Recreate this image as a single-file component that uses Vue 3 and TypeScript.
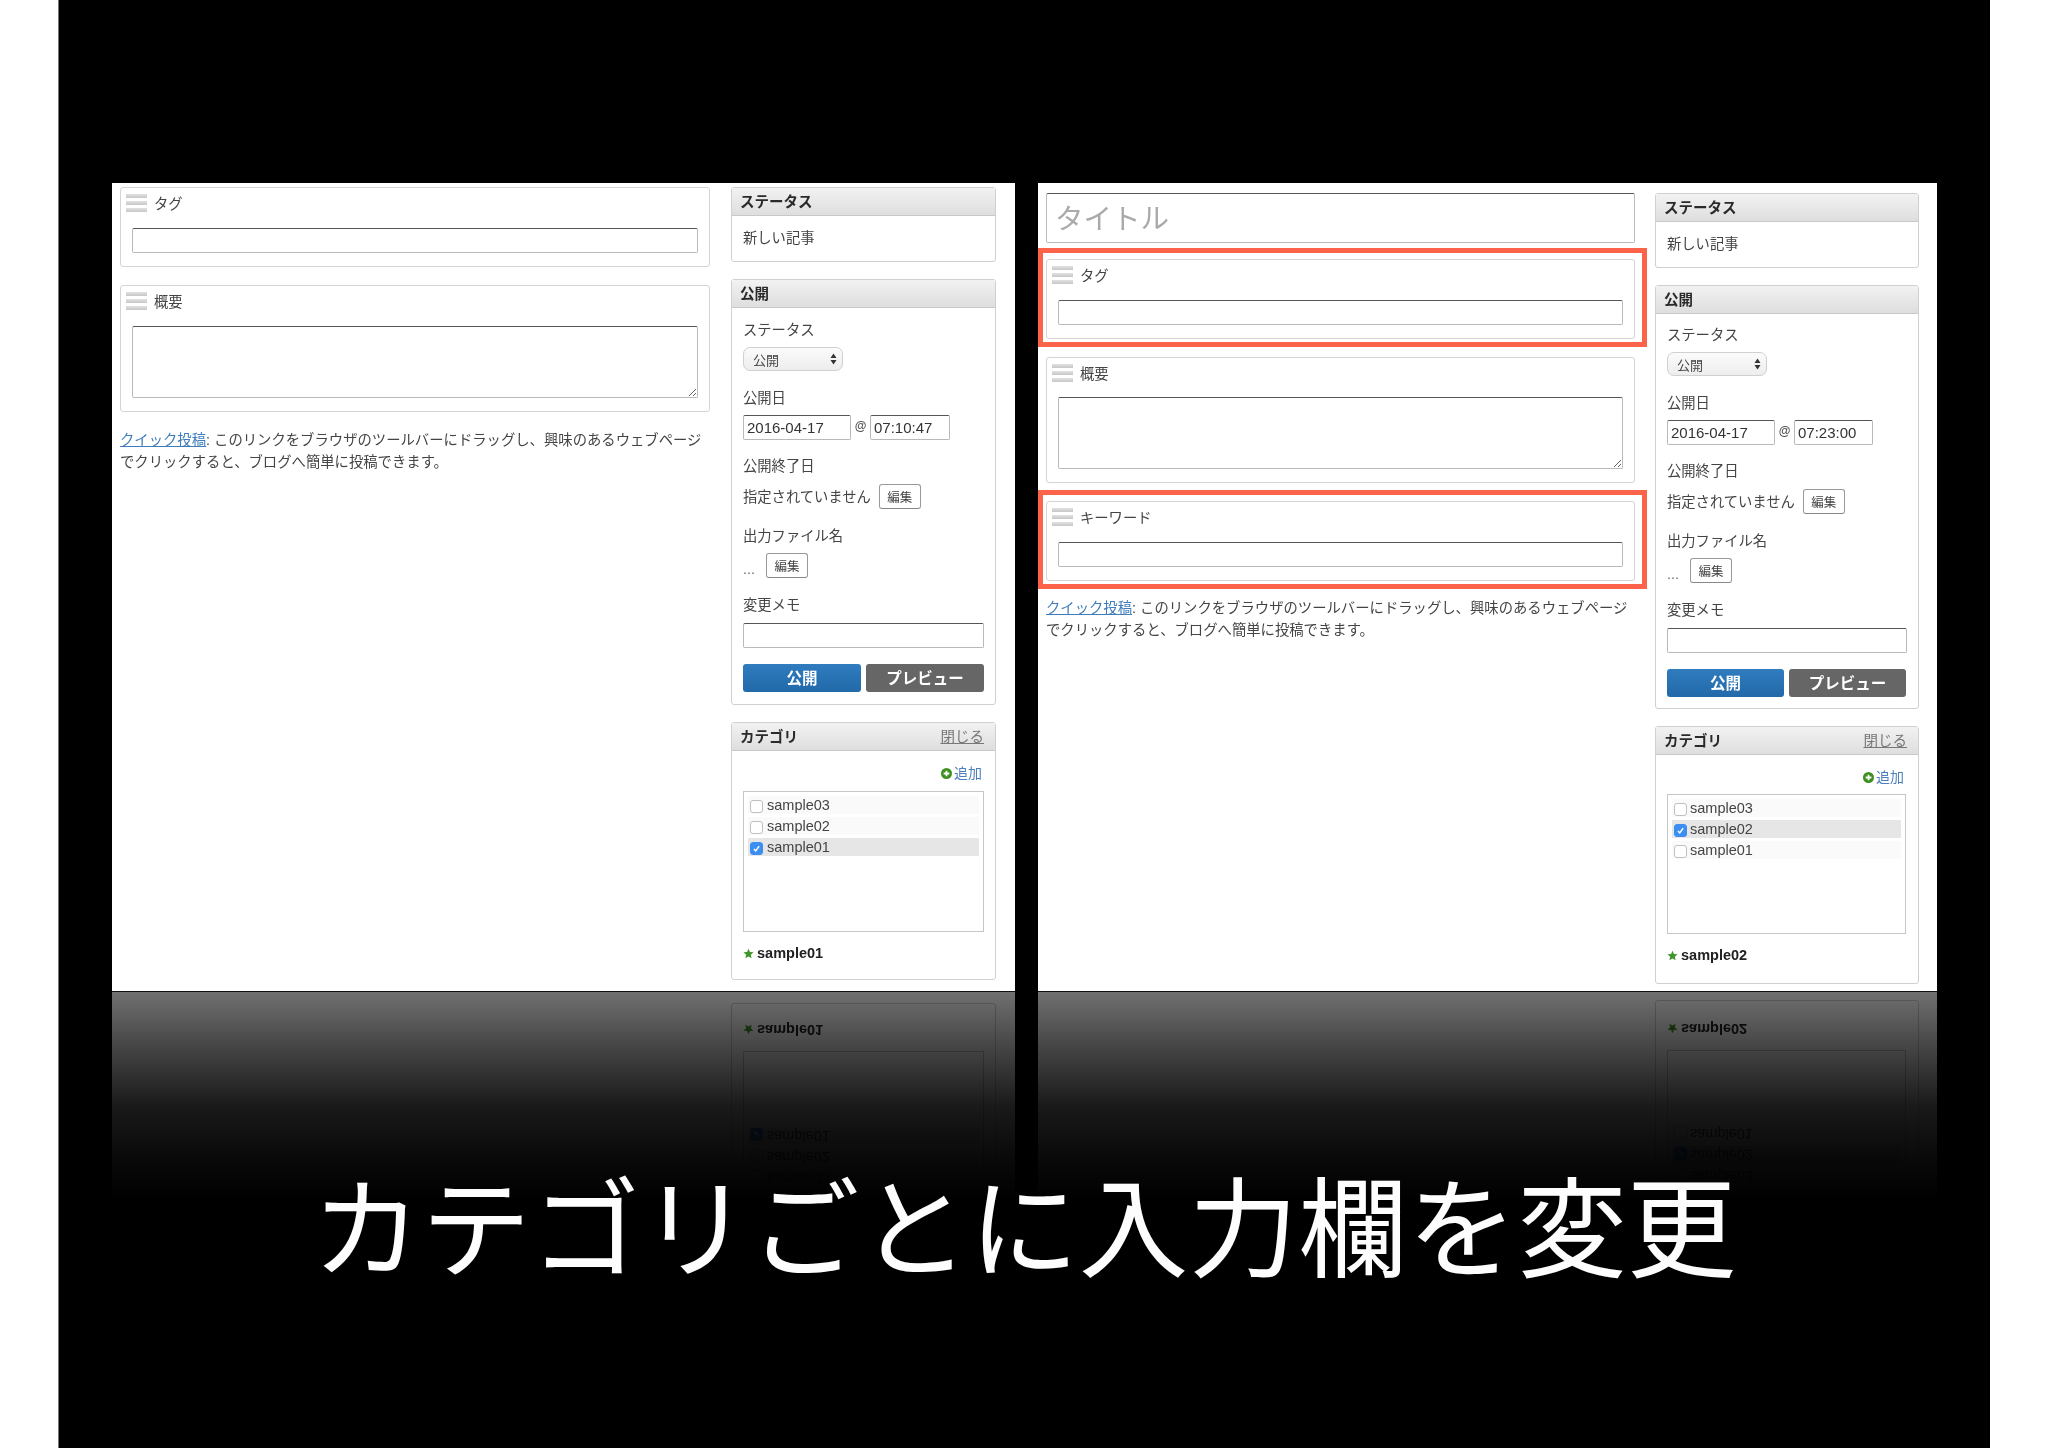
<script setup lang="ts">
interface Field { label: string; kind: 'input' | 'textarea'; mark: boolean }
interface Screen { id: string; hasTitle: boolean; time: string; fields: Field[]; cats: string[]; main: string }

const screens: Screen[] = [
  {
    id: 'left', hasTitle: false, time: '07:10:47', main: 'sample01',
    cats: ['sample03', 'sample02', 'sample01'],
    fields: [
      { label: 'タグ', kind: 'input', mark: false },
      { label: '概要', kind: 'textarea', mark: false },
    ],
  },
  {
    id: 'right', hasTitle: true, time: '07:23:00', main: 'sample02',
    cats: ['sample03', 'sample02', 'sample01'],
    fields: [
      { label: 'タグ', kind: 'input', mark: true },
      { label: '概要', kind: 'textarea', mark: false },
      { label: 'キーワード', kind: 'input', mark: true },
    ],
  },
]
const modes = ['shot', 'mirror']
</script>

<template>
  <div class="page">
    <div class="slide">
      <div v-for="screen in screens" :key="screen.id" class="column" :class="screen.id">
        <div v-for="mode in modes" :key="mode" :class="mode">
          <div class="sheet">
            <div class="main">
              <template v-if="mode === 'shot'">
                <input v-if="screen.hasTitle" class="title-input" placeholder="タイトル" />
                <div v-for="f in screen.fields" :key="f.label" class="field" :class="f.mark ? 'mark' : 'plain'">
                  <div class="box">
                    <div class="box-head">
                      <div class="handle"><i></i><i></i><i></i></div>
                      <span class="box-label">{{ f.label }}</span>
                    </div>
                    <input v-if="f.kind === 'input'" class="text wide" />
                    <textarea v-else class="text wide area"></textarea>
                  </div>
                </div>
                <p class="quick"><a>クイック投稿</a>: このリンクをブラウザのツールバーにドラッグし、興味のあるウェブページ<br />でクリックすると、ブログへ簡単に投稿できます。</p>
              </template>
            </div>

            <div class="side">
              <template v-if="mode === 'shot'">
                <section class="panel">
                  <h3 class="panel-head"><span>ステータス</span></h3>
                  <div class="panel-body status-body"><div class="line">新しい記事</div></div>
                </section>

                <section class="panel publish">
                  <h3 class="panel-head"><span>公開</span></h3>
                  <div class="panel-body publish-body">
                    <div class="line">ステータス</div>
                    <div class="select g7">
                      <span>公開</span>
                      <svg width="7" height="12" viewBox="0 0 7 12"><path d="M3.500 0.500 6.500 5H.5zM3.500 11.500.5 7h6z" fill="#333" /></svg>
                    </div>
                    <div class="line g17">公開日</div>
                    <div class="date-row g7">
                      <input class="text date" value="2016-04-17" />
                      <span class="at">@</span>
                      <input class="text time" :value="screen.time" />
                    </div>
                    <div class="line g16">公開終了日</div>
                    <div class="edit-row g8">
                      <span class="lift">指定されていません</span>
                      <button class="edit">編集</button>
                    </div>
                    <div class="line g17">出力ファイル名</div>
                    <div class="edit-row g7 short">
                      <span>...</span>
                      <button class="edit">編集</button>
                    </div>
                    <div class="line g17">変更メモ</div>
                    <input class="text memo g8" />
                    <div class="actions g16">
                      <button class="act blue">公開</button>
                      <button class="act gray">プレビュー</button>
                    </div>
                  </div>
                </section>
              </template>

              <section class="panel category">
                <h3 v-if="mode === 'shot'" class="panel-head"><span>カテゴリ</span><a class="close">閉じる</a></h3>
                <div class="panel-body cat-body">
                  <div v-if="mode === 'shot'" class="add">
                    <svg width="11" height="11" viewBox="0 0 10 10">
                      <circle cx="5" cy="5" r="5" fill="#3d8f20" />
                      <path d="M5 2.400v5.200M2.400 5h5.200" stroke="#fff" stroke-width="1.600" />
                    </svg>
                    <a>追加</a>
                  </div>
                  <div class="list">
                    <div v-for="c in screen.cats" :key="c" class="row" :class="{ on: c === screen.main }">
                      <span class="check">
                        <svg v-if="c === screen.main" width="13" height="13" viewBox="0 0 13 13">
                          <path d="M3.500 7 5.600 9.400 9.600 3.800" fill="none" stroke="#fff" stroke-width="1.700" />
                        </svg>
                      </span>
                      <span>{{ c }}</span>
                    </div>
                  </div>
                  <div class="primary">
                    <svg width="11" height="11" viewBox="0 0 24 24"><path d="M12 1.500l3.200 7.200 7.800.8-5.900 5.200 1.700 7.700L12 18.400l-6.800 4 1.700-7.700L1 9.500l7.800-.8z" fill="#3f962a" /></svg>
                    <b>{{ screen.main }}</b>
                  </div>
                </div>
              </section>
            </div>
          </div>
          <div v-if="mode === 'mirror'" class="fade"></div>
        </div>
      </div>
      <h1 class="headline">カテゴリごとに入力欄を変更</h1>
    </div>
  </div>
</template>

<style scoped>
.page {
  width: 2048px;
  height: 1448px;
  background: #fff;
  padding: 0 58px;
  box-sizing: border-box;
  overflow: hidden;
  font-family: "Liberation Sans", "Noto Sans CJK JP", sans-serif;
  color: #444;
  font-size: 14.3px;
}
.slide {
  position: relative;
  height: 1448px;
  background: #000;
  box-shadow: inset 1px 0 0 #777;
  display: flex;
  gap: 23px;
  padding: 183px 0 0 54px;
  box-sizing: border-box;
}
.column { display: flex; flex-direction: column; }
.column.left { width: 903px; }
.column.right { width: 899px; }

.shot { height: 808px; }
.mirror {
  position: relative;
  height: 210px;
  overflow: hidden;
}
.mirror .sheet { transform: scaleY(-1); }
.mirror .side { justify-content: flex-end; }
.left .mirror .side { padding-bottom: 12px; }
.right .mirror .side { padding-bottom: 9px; }
.mirror .category { min-height: 257px; display: flex; flex-direction: column; justify-content: flex-end; }
.fade {
  position: absolute;
  inset: 0;
  border-top: 1px solid #111;
  background: linear-gradient(to bottom, rgba(0,0,0,.56) 0, rgba(0,0,0,.72) 25%, rgba(0,0,0,.9) 55%, rgba(0,0,0,.965) 80%, #000 100%);
}

.sheet {
  height: 808px;
  background: #fff;
  display: flex;
  box-sizing: border-box;
  padding-left: 8px;
  filter: blur(.35px);
}
.left .sheet { padding-top: 4px; gap: 21px; }
.right .sheet { padding-top: 10px; gap: 20px; }

.main { display: flex; flex-direction: column; }
.left .main { width: 590px; }
.right .main { width: 589px; }
.left .field + .field { margin-top: 18px; }
.left .quick { margin-top: 17px; }
.right .mark { margin-top: 5px; }
.right .plain { margin-top: 10px; }
.right .plain + .mark { margin-top: 7px; }
.right .quick { margin-top: 8px; }

.mark {
  margin-left: -8px;
  margin-right: -12px;
  border: 5px solid #fb634a;
  padding: 6px 7px 3px 3px;
}

.title-input {
  height: 50px;
  box-sizing: border-box;
  border: 1px solid #bbb;
  border-top-color: #555;
  border-radius: 2px;
  padding: 2px 8px 0;
  font: 28.5px "Liberation Sans", "Noto Sans CJK JP", sans-serif;
  outline: none;
}
.title-input::placeholder { color: #aaa; }

.box {
  border: 1px solid #d4d4d4;
  border-radius: 3px;
  padding: 6px 11px 13px 5px;
  background: #fff;
}
.box-head {
  display: flex;
  align-items: center;
  gap: 7px;
  height: 18px;
  margin-bottom: 16px;
  color: #444;
}
.right .plain .box-head { margin-bottom: 15px; }
.box-label { margin-top: -2px; }
.handle { width: 21px; height: 18px; display: flex; flex-direction: column; justify-content: space-between; }
.handle i { display: block; height: 4px; background: linear-gradient(#e2e2e2, #c6c6c6); }

.text {
  display: block;
  box-sizing: border-box;
  border: 1px solid #b9b9b9;
  border-top-color: #555;
  border-radius: 2px;
  background: #fff;
  padding: 0 3px;
  height: 25px;
  color: #333;
  outline: none;
  font: 15px "Liberation Sans", sans-serif;
}
.wide { width: calc(100% - 6px); margin-left: 6px; }
.area { height: 72px; }

.quick { margin: 0; font-size: 14.35px; line-height: 22px; color: #444; white-space: nowrap; }
.quick a { color: #3f7cbb; text-decoration: underline; }

.side { display: flex; flex-direction: column; }
.left .side { width: 265px; }
.right .side { width: 264px; }

.panel {
  border: 1px solid #d0d0d0;
  border-radius: 3px;
  box-sizing: border-box;
  background: #fff;
}
.publish { margin-top: 17px; }
.category { margin-top: 17px; }

.panel-head {
  margin: 0;
  height: 28px;
  box-sizing: border-box;
  padding: 0 11px 3px 8px;
  display: flex;
  align-items: center;
  justify-content: space-between;
  background: linear-gradient(#f2f2f2, #dedede);
  border-bottom: 1px solid #c8c8c8;
  font-size: 14.5px;
  font-weight: 700;
  color: #2a2a2a;
}
.close { font-weight: 400; color: #777; text-decoration: underline; font-size: 14.5px; }

.panel-body { padding: 12px 11px 12px 11px; display: flex; flex-direction: column; }
.status-body { padding-bottom: 13px; }
.right .publish-body { padding: 11px 12px 11px 11px; }
.line { height: 20px; line-height: 20px; color: #444; }
.g7 { margin-top: 7px; }
.g8 { margin-top: 8px; }
.g16 { margin-top: 16px; }
.g17 { margin-top: 17px; }

.select {
  width: 100px;
  height: 24px;
  box-sizing: border-box;
  border: 1px solid #d0d0d0;
  border-radius: 7px;
  background: linear-gradient(#fbfbfb, #ededed);
  display: flex;
  align-items: center;
  justify-content: space-between;
  padding: 0 5px 0 9px;
  font-size: 13px;
}
.date-row { display: flex; align-items: center; }
.date { width: 108px; }
.time { width: 80px; }
.right .time { width: 79px; }
.at { width: 19px; text-align: center; font-size: 12px; margin-top: -4px; color: #555; font-weight: 700; }
.edit-row { display: flex; align-items: center; gap: 8px; }
.edit-row.short { gap: 11px; }
.edit-row.short span { height: 22px; line-height: 28px; color: #666; }
.lift { margin-top: -3px; }
.edit {
  width: 42px;
  height: 25px;
  padding: 0;
  box-sizing: border-box;
  border: 1px solid #999;
  border-bottom-color: #888;
  border-radius: 3px;
  background: #fff;
  color: #444;
  font: 12.5px "Liberation Sans", "Noto Sans CJK JP", sans-serif;
}
.memo { width: 241px; }
.right .memo { width: 240px; }
.actions { display: flex; gap: 5px; }
.act {
  flex: 1;
  height: 28px;
  padding: 0 0 2px;
  border: 0;
  border-radius: 3px;
  color: #fff;
  font: 700 15.5px "Liberation Sans", "Noto Sans CJK JP", sans-serif;
}
.blue { background: linear-gradient(#2f7cbf, #2269a8); }
.gray { background: #666; }

.cat-body { padding: 13px 11px 16px; }
.right .cat-body { padding: 13px 12px 18px 11px; }
.add { height: 18px; display: flex; align-items: center; justify-content: flex-end; gap: 2px; padding-right: 2px; margin-top: -1px; }
.add a { color: #4d7fbd; font-size: 14px; }
.add svg { margin-top: 3px; }
.list {
  margin-top: 10px;
  height: 141px;
  box-sizing: border-box;
  border: 1px solid #c6c6c6;
  padding: 4px 4px 0;
  display: flex;
  flex-direction: column;
  gap: 3px;
}
.right .list { height: 140px; margin-top: 9px; }
.row {
  height: 18px;
  display: flex;
  align-items: center;
  gap: 4px;
  padding-left: 2px;
  background: #fafafa;
  color: #444;
  font-size: 14.5px;
}
.right .row { gap: 3px; }
.row.on { background: #e6e6e6; }
.check {
  width: 13px;
  height: 13px;
  box-sizing: border-box;
  border: 1px solid #c0c0c0;
  border-radius: 3px;
  background: #fff;
  margin-top: 2px;
  display: flex;
  align-items: center;
  justify-content: center;
}
.on .check { background: #3c8ff0; border-color: #3c8ff0; }
.primary { margin-top: 11px; height: 20px; display: flex; align-items: center; gap: 3px; color: #222; font-size: 14.5px; }

.headline {
  position: absolute;
  left: 0;
  right: 0;
  top: 1157px;
  margin: 0;
  text-align: center;
  color: #fdfdfd;
  font: 400 109.6px/130px "Noto Sans CJK JP", sans-serif;
  white-space: nowrap;
}
</style>
